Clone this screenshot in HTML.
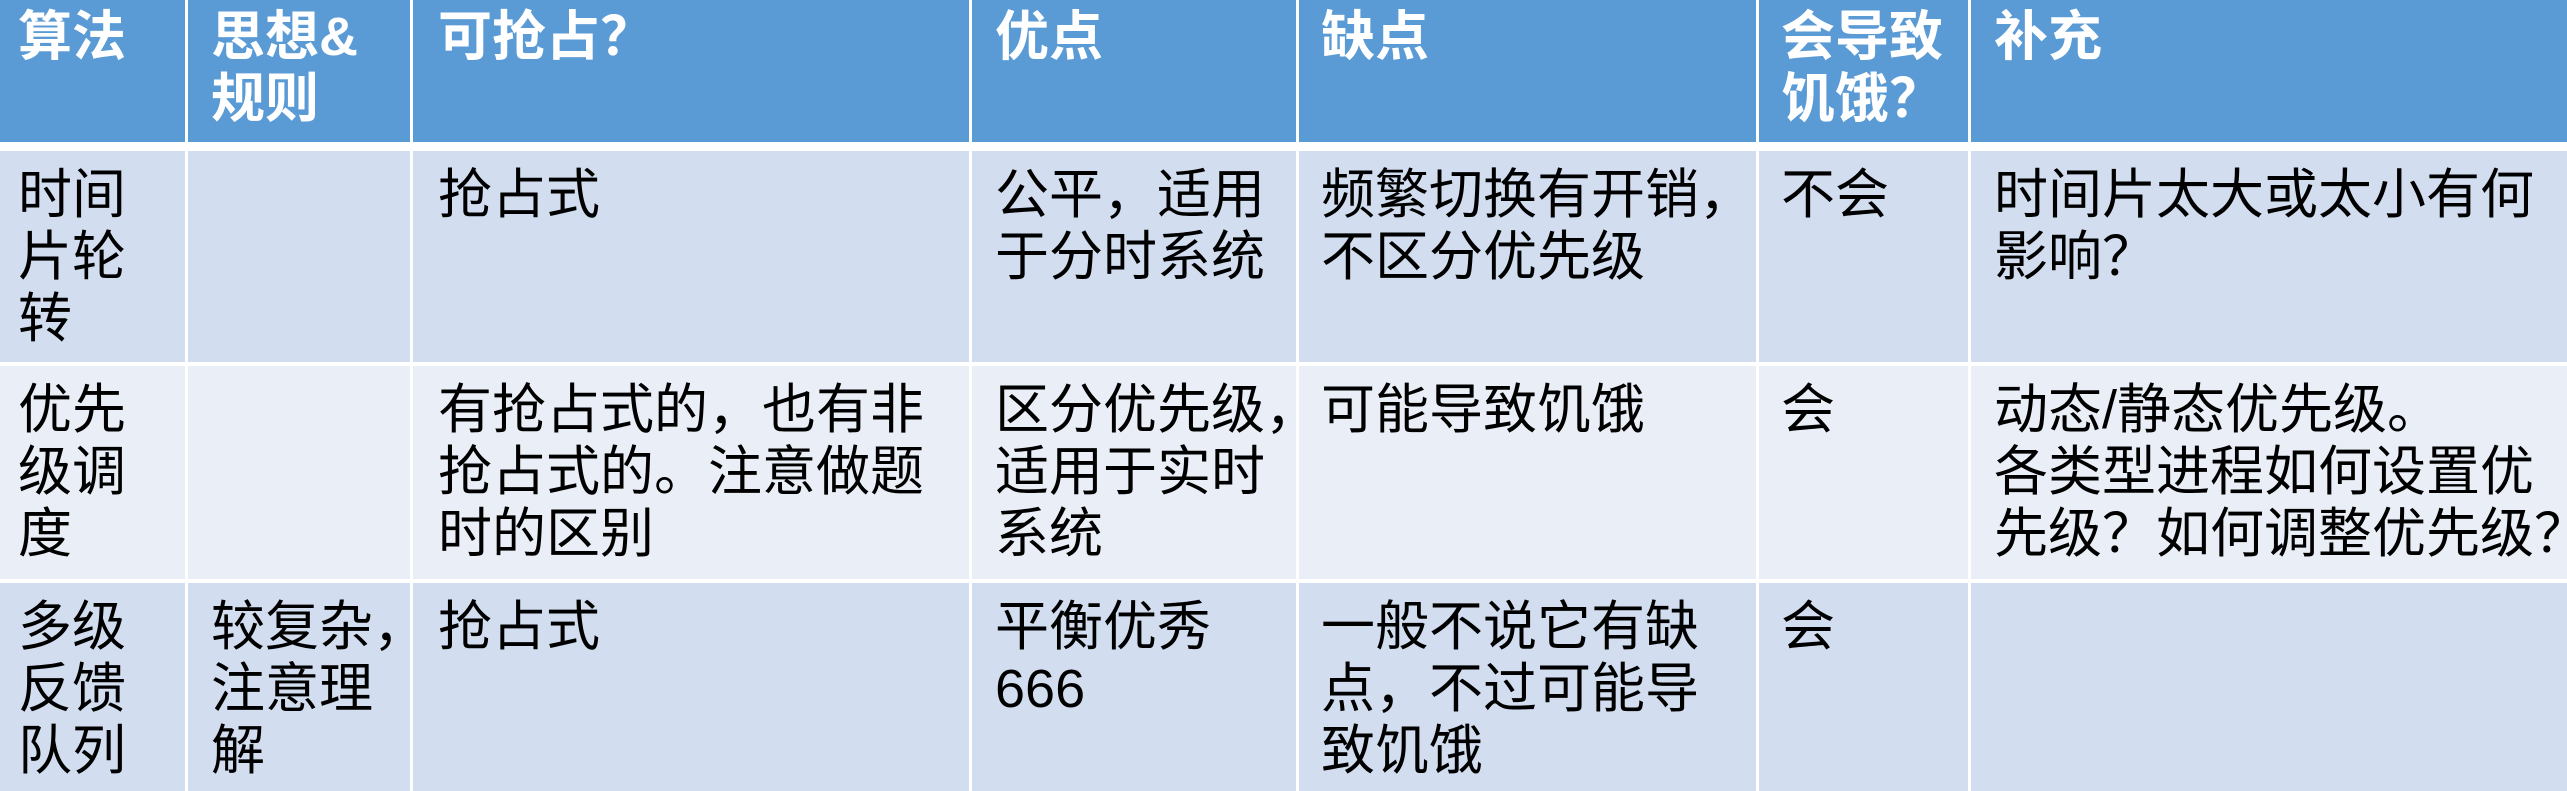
<!DOCTYPE html>
<html><head><meta charset="utf-8"><style>
html,body{margin:0;padding:0;}
body{width:2567px;height:791px;position:relative;overflow:hidden;background:#fff;font-family:"Liberation Sans","Noto Sans CJK SC",sans-serif;}
.c{position:absolute;box-sizing:border-box;font-size:54px;line-height:62px;color:#000;white-space:nowrap;}
.h{background:#5B9BD5;color:#fff;font-weight:bold;top:0;height:142px;padding-top:6px;}
.r1{background:#D2DEEF;top:151px;height:211px;padding-top:13px;}
.r2{background:#EAEFF7;top:366px;height:213px;padding-top:13px;}
.r3{background:#D2DEEF;top:583px;height:208px;padding-top:13px;}
.a{left:0;width:185px;padding-left:18px;}
.b{left:188px;width:222px;padding-left:23px;}
.d{left:413px;width:556px;padding-left:25px;}
.e{left:972px;width:324px;padding-left:23px;}
.f{left:1299px;width:457px;padding-left:22px;}
.g{left:1759px;width:209px;padding-left:22px;}
.k{left:1971px;width:596px;padding-left:23px;}
</style></head><body>
<div class="c h a">算法</div>
<div class="c h b">思想&amp;<br>规则</div>
<div class="c h d">可抢占？</div>
<div class="c h e">优点</div>
<div class="c h f">缺点</div>
<div class="c h g">会导致<br>饥饿？</div>
<div class="c h k">补充</div>

<div class="c r1 a">时间<br>片轮<br>转</div>
<div class="c r1 b"></div>
<div class="c r1 d">抢占式</div>
<div class="c r1 e">公平，适用<br>于分时系统</div>
<div class="c r1 f">频繁切换有开销，<br>不区分优先级</div>
<div class="c r1 g">不会</div>
<div class="c r1 k">时间片太大或太小有何<br>影响？</div>

<div class="c r2 a">优先<br>级调<br>度</div>
<div class="c r2 b"></div>
<div class="c r2 d">有抢占式的，也有非<br>抢占式的。注意做题<br>时的区别</div>
<div class="c r2 e">区分优先级，<br>适用于实时<br>系统</div>
<div class="c r2 f">可能导致饥饿</div>
<div class="c r2 g">会</div>
<div class="c r2 k">动态/静态优先级。<br>各类型进程如何设置优<br>先级？如何调整优先级？</div>

<div class="c r3 a">多级<br>反馈<br>队列</div>
<div class="c r3 b">较复杂，<br>注意理<br>解</div>
<div class="c r3 d">抢占式</div>
<div class="c r3 e">平衡优秀<br>666</div>
<div class="c r3 f">一般不说它有缺<br>点，不过可能导<br>致饥饿</div>
<div class="c r3 g">会</div>
<div class="c r3 k"></div>
</body></html>
